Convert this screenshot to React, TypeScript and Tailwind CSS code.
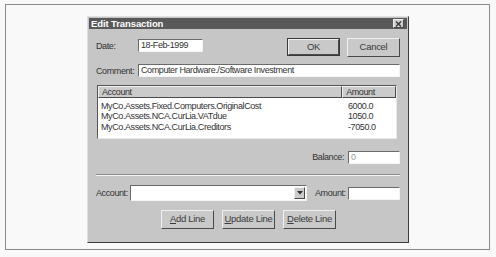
import React from "react";

const raised = "border border-t-[#f0f0f0] border-l-[#f0f0f0] border-b-[#4a4a4a] border-r-[#4a4a4a]";
const sunken = "border border-t-[#6a6a6a] border-l-[#6a6a6a] border-b-[#f4f4f4] border-r-[#f4f4f4]";

function Btn({ children, def }: { children: React.ReactNode; def?: boolean }) {
  return (
    <div className={def ? "border border-[#3a3a3a] w-[53px] h-[18px]" : "w-[53px] h-[19px]"}>
      <div
        className={`${raised} bg-[#c9c9c9] w-full h-full flex items-center justify-center text-[9.5px] text-[#3a3a3a] tracking-[-0.3px]`}
      >
        {children}
      </div>
    </div>
  );
}

export default function App() {
  const rows = [
    ["MyCo.Assets.Fixed.Computers.OriginalCost", "6000.0"],
    ["MyCo.Assets.NCA.CurLia.VATdue", "1050.0"],
    ["MyCo.Assets.NCA.CurLia.Creditors", "-7050.0"],
  ];
  return (
    <div
      className="w-[496px] h-[257px] bg-[#f9f9f9] pt-[4px] pl-[5px]"
      style={{ fontFamily: '"Liberation Sans", Arial, sans-serif' }}
    >
      <div className="w-[485px] h-[246px] border border-[#8a8a8a] pl-[81px] pt-[11px]">
        <div className={`w-[322px] h-[227px] bg-[#c6c6c6] border border-t-[#e0e0e0] border-l-[#e0e0e0] border-b-[#3c3c3c] border-r-[#3c3c3c] flex flex-col`}>
          {/* Title bar */}
          <div className="mx-[1px] mt-[1px] h-[11px] bg-[#595959] flex items-center justify-between pl-[2px] pr-[3px]">
            <span className="text-white font-bold text-[9.5px] leading-none tracking-[-0.1px]">Edit Transaction</span>
            <div className={`${raised} w-[11px] h-[9px] bg-[#cfcfcf] flex items-center justify-center`}>
              <svg width="7" height="6" viewBox="0 0 7 6">
                <path d="M1 0.5 L6 5.5 M6 0.5 L1 5.5" stroke="#333" strokeWidth="1.3" />
              </svg>
            </div>
          </div>
          <div className="flex flex-col pl-[8px] pr-[8px] text-[9px] text-[#333] tracking-[-0.4px]">
            {/* Row 1 */}
            <div className="flex items-start mt-[9px]">
              <div className="w-[42px] mt-[3px] leading-[10px]">Date:</div>
              <div className={`${sunken} bg-white w-[65px] h-[13px] mt-[1px] flex items-center pl-[2px] leading-none`}>
                18-Feb-1999
              </div>
              <div className="flex-1" />
              <Btn def>OK</Btn>
              <div className="w-[7px]" />
              <Btn>Cancel</Btn>
            </div>
            {/* Row 2 */}
            <div className="flex items-center mt-[7px]">
              <div className="w-[42px] leading-[10px]">Comment:</div>
              <div className={`${sunken} bg-white flex-1 h-[13px] flex items-center pl-[2px] leading-none`}>
                Computer Hardware./Software Investment
              </div>
            </div>
            {/* List */}
            <div className={`mt-[8px] ml-[1px] mr-[3px] h-[54px] bg-white border border-t-[#555] border-l-[#555] border-b-[#e8e8e8] border-r-[#e8e8e8] flex flex-col`}>
              <div className="flex h-[12px] bg-[#cbcbcb]">
                <div className={`${raised} w-[245px] h-full flex items-center pl-[3px] leading-none`}>Account</div>
                <div className={`${raised} w-[54px] h-full flex items-center pl-[3px] leading-none`}>Amount</div>
              </div>
              <div className="flex flex-col pt-[3px]">
                {rows.map(([a, b]) => (
                  <div key={a} className="flex h-[10.5px] items-center leading-none">
                    <div className="w-[246px] pl-[3px]">{a}</div>
                    <div className="pl-[4px]">{b}</div>
                  </div>
                ))}
              </div>
            </div>
            {/* Balance */}
            <div className="flex items-center justify-end mt-[12px]">
              <div className="leading-none mr-[4px]">Balance:</div>
              <div className={`${sunken} bg-white w-[52px] h-[13px] flex items-center pl-[2px] leading-none text-[#999]`}>0</div>
            </div>
            {/* Separator */}
            <div className="mt-[10px] h-[2px] border-t border-t-[#8c8c8c] border-b border-b-[#f4f4f4]" />
            {/* Account row */}
            <div className="flex items-center mt-[9px]">
              <div className="w-[34px] leading-none">Account:</div>
              <div className={`${sunken} bg-white w-[177px] h-[16px] flex items-center justify-end pr-[1px]`}>
                <div className={`${raised} bg-[#cbcbcb] w-[11px] h-[12px] flex items-center justify-center`}>
                  <svg width="6" height="4" viewBox="0 0 6 4">
                    <path d="M0 0 L6 0 L3 3.5 Z" fill="#333" />
                  </svg>
                </div>
              </div>
              <div className="w-[8px]" />
              <div className="leading-none">Amount:</div>
              <div className="flex-1" />
              <div className={`${sunken} bg-white w-[52px] h-[13px]`} />
            </div>
            {/* Buttons */}
            <div className="flex mt-[9px] pl-[65px] gap-[8px]">
              <Btn><span><u>A</u>dd Line</span></Btn>
              <Btn><span><u>U</u>pdate Line</span></Btn>
              <Btn><span><u>D</u>elete Line</span></Btn>
            </div>
          </div>
        </div>
      </div>
    </div>
  );
}
